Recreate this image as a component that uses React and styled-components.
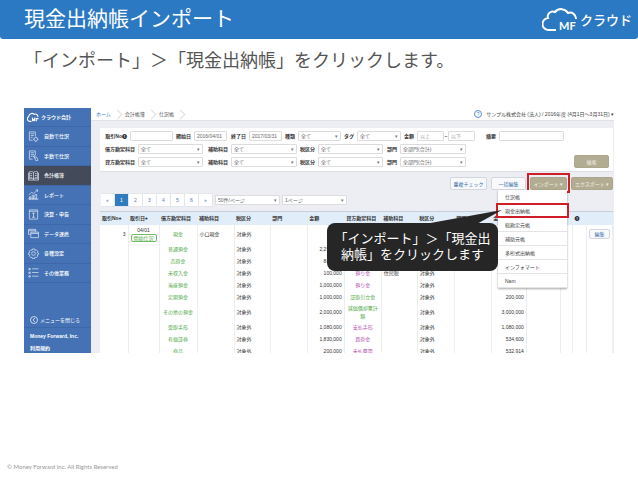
import React from "react";
import styled, { createGlobalStyle, css } from "styled-components";

const menuLateral = [
    { texto: "自動で仕訳", icono: "auto" },
    { texto: "手動で仕訳", icono: "manual" },
    { texto: "会計帳簿", icono: "book", activo: true },
    { texto: "レポート", icono: "report" },
    { texto: "決算・申告", icono: "closing" },
    { texto: "データ連携", icono: "data" },
    { texto: "各種設定", icono: "gear" },
    { texto: "その他業務", icono: "list" },
];

const importMenu = ["仕訳帳", "現金出納帳", "総勘定元帳", "補助元帳", "多桁式出納帳", "インフォマート", "Nam"];

const columnas = [
    ["取引No", 28, true],
    ["取引日", 31, true],
    ["借方勘定科目", 38],
    ["補助科目", 37],
    ["税区分", 36],
    ["部門", 37],
    ["金額", 37],
    ["貸方勘定科目", 37],
    ["補助科目", 36],
    ["税区分", 37],
    ["部門", 37],
    ["金額", 35],
    ["", 34],
    ["", 12],
    ["info", 14],
    ["", 26],
];

const filas = [
    { no: "3", debe: "現金", sub: "小口現金", alto: true },
    { debe: "普通預金", monto: "2,290,000" },
    { debe: "売掛金", monto: "838,000" },
    { debe: "未収入金", monto: "100,000", haber: "預り金", subHaber: "住民税", tono: "pink" },
    { debe: "当座預金", monto: "1,000,000", haber: "預り金", tono: "pink" },
    { debe: "定期預金", monto: "1,000,000", haber: "証取引立金", montoHaber: "200,000" },
    { debe: "その他の預金", monto: "2,000,000", haber: "減価償却累計額", montoHaber: "3,000,000", alto: true },
    { debe: "受取手形", monto: "1,080,000", haber: "支払手形", montoHaber: "1,080,000", tono: "pink" },
    { debe: "有価証券", monto: "1,830,000", haber: "買掛金", montoHaber: "534,600", tono: "pink" },
    { debe: "商品", monto: "200,000", haber: "未払費用", montoHaber: "532,914", tono: "pink" },
];

const Icono = ({ tipo }) => (
    <IconSvg viewBox="0 0 24 24" aria-hidden="true">
        {tipo === "auto" && (
            <>
                <path d="M10 20H3V2h13v9M6 6h7M6 10h7M6 14h4" />
                <circle cx="17" cy="18" r="4" />
                <path d="M17 12v2M17 22v2M11 18h2M21 18h2" />
            </>
        )}
        {tipo === "manual" && <path d="M10 20H3V2h13v9M6 6h7M6 10h7M6 14h4M12 13l3-1 6 7v4h-4zM12 13l5 6" />}
        {tipo === "book" && (
            <path d="M12 5v16M12 5c-3-2-6-2-9-1v15c3-1 6-1 9 1 3-2 6-2 9-1V4c-3-1-6-1-9 1M5 8h4M5 12h4M5 16h4M15 8h4M15 12h4M15 16h4M1 6v16h22V6" />
        )}
        {tipo === "report" && <path d="M2 13l6-6 4 3 9-8M17 2h4v4M3 22v-5h3v5zM9 22v-8h3v8zM15 22V12h4v10zM1 22h22" />}
        {tipo === "closing" && <path d="M3 2h18v20H3zM3 5h18M9 9h6M12 9v9M9 18h6" />}
        {tipo === "data" && <path d="M5 14H1V3h16v5M1 6h16M6 9h17v12H6zM6 12h17" />}
        {tipo === "gear" && (
            <>
                <circle cx="12" cy="12" r="4" />
                <path d="M10 2h4l1 3 3-1 3 3-1 3 3 1v3l-3 1 1 3-3 3-3-1-1 3h-4l-1-3-3 1-3-3 1-3-3-1v-3l3-1-1-3 3-3 3 1z" />
            </>
        )}
        {tipo === "list" && <path d="M2 3h3v3H2zM2 11h3v3H2zM2 19h3v3H2zM9 4h14M9 12h14M9 20h14" />}
    </IconSvg>
);

const Campo = ({ id, label, value, placeholder }) => (
    <>
        <Label htmlFor={id}>{label}</Label>
        <Input id={id} defaultValue={value} placeholder={placeholder} />
    </>
);

const Lista = ({ id, label, value = "全て" }) => (
    <>
        <Label htmlFor={id}>{label}</Label>
        <SelectBox>
            <Select id={id}>
                <option>{value}</option>
            </Select>
        </SelectBox>
    </>
);

const FilaCuenta = ({ id, label, children }) => (
    <FilterRow $cols={[34, 65, 28, 66, 21, 65, 17, 66, 143]}>
        <Lista id={`${id}-cuenta`} label={label} />
        <Lista id={`${id}-sub`} label="補助科目" />
        <Lista id={`${id}-iva`} label="税区分" />
        <Lista id={`${id}-depto`} label="部門" value="全部門(合計)" />
        {children}
    </FilterRow>
);

const Sidebar = () => (
    <Aside>
        <AppLogo>
            <svg width="13" height="10" viewBox="0 0 24 18" fill="none" stroke="#fff" strokeWidth="2" aria-hidden="true">
                <path d="M10 17H6a5 5 0 0 1-1-9 6 6 0 0 1 10-4 5 5 0 0 1 7 5M12 17v-5l2 3 2-3v5M19 17v-5h4" />
            </svg>
            クラウド会計
        </AppLogo>
        <Nav>
            {menuLateral.map((item) => (
                <NavItem href="#" key={item.texto} $activo={item.activo}>
                    <Icono tipo={item.icono} />
                    {item.texto}
                </NavItem>
            ))}
        </Nav>
        <CloseMenu>
            <svg width="8" height="8" viewBox="0 0 16 16" fill="none" stroke="#fff" strokeWidth="1.4" aria-hidden="true">
                <circle cx="8" cy="8" r="7" />
                <path d="M10 4L6 8l4 4" />
            </svg>
            メニューを閉じる
        </CloseMenu>
        <SideLink href="#">Money Forward, Inc.</SideLink>
        <SideLink href="#">利用規約</SideLink>
    </Aside>
);

const Filtros = () => (
    <Panel>
        <FilterRow $cols={[26, 43, 21, 33, 22, 33, 16, 43, 16, 44, 16, 27, 4, 27, 24, 65, 45]}>
            <Campo id="no" label="取引No❶" />
            <Campo id="desde" label="開始日" value="2016/04/01" />
            <Campo id="hasta" label="終了日" value="2017/03/31" />
            <Lista id="tipo" label="種類" />
            <Lista id="tag" label="タグ" />
            <Campo id="min" label="金額" placeholder="以上" />
            <Tilde htmlFor="max">~</Tilde>
            <Input id="max" placeholder="以下" />
            <Campo id="nota" label="摘要" />
        </FilterRow>
        <FilaCuenta id="debe" label="借方勘定科目" />
        <FilaCuenta id="haber" label="貸方勘定科目">
            <SearchButton>検索</SearchButton>
        </FilaCuenta>
    </Panel>
);

const Acciones = () => (
    <Actions>
        <ActionButton $ancho={37}>重複チェック</ActionButton>
        <ActionButton $ancho={35}>一括編集</ActionButton>
        <ImportBox>
            <ActionButton $ancho={37} $oliva>インポート ▾</ActionButton>
            <Menu>
                {importMenu.map((texto, i) => (
                    <MenuItem key={texto} $marcado={i === 1}>{texto}</MenuItem>
                ))}
            </Menu>
        </ImportBox>
        <ActionButton $ancho={42} $oliva>エクスポート ▾</ActionButton>
    </Actions>
);

const Tabla = () => (
    <Table>
        <colgroup>
            {columnas.map(([, ancho], i) => (
                <Col key={i} $ancho={ancho} />
            ))}
        </colgroup>
        <thead>
            <tr>
                {columnas.map(([texto, , orden], i) => (
                    <Th key={i}>
                        {texto === "info" ? "❶" : texto}
                        {orden && "♠"}
                    </Th>
                ))}
            </tr>
        </thead>
        <tbody>
            {filas.map((f) => (
                <Row key={f.debe} $alto={f.alto}>
                    <Td $align="right">{f.no}</Td>
                    <Td $align="center">
                        {f.no && <>04/01<Tag>開始仕訳</Tag></>}
                    </Td>
                    <Td $align="center" $tono="green">{f.debe}</Td>
                    <Td>{f.sub}</Td>
                    <Td>対象外</Td>
                    <Td />
                    <Td $align="right">{f.monto}</Td>
                    <Td $align="center" $tono={f.tono || "green"}>{f.haber}</Td>
                    <Td>{f.subHaber}</Td>
                    <Td>{f.haber && "対象外"}</Td>
                    <Td />
                    <Td $align="right">{f.montoHaber}</Td>
                    <Td />
                    <Td />
                    <Td />
                    <Td $align="center">{f.no && <EditButton>編集</EditButton>}</Td>
                </Row>
            ))}
        </tbody>
    </Table>
);

const App = () => (
    <Page>
        <GlobalStyle />
        <Header>
            <Title>現金出納帳インポート</Title>
            <Logo>
                <svg width="36" height="24" viewBox="0 0 36 24" aria-hidden="true">
                    <path
                        d="M14 22H7a6 6 0 0 1-1-12 5 5 0 0 1 7-6 8 8 0 0 1 13 1 6 6 0 0 1 8 6"
                        fill="none"
                        stroke="#fff"
                        strokeWidth="2"
                    />
                    <text x="17" y="22" fill="#fff" fontFamily="Lato, sans-serif" fontSize="11" fontWeight="700">MF</text>
                </svg>
                クラウド
            </Logo>
        </Header>
        <Lead>「インポート」＞「現金出納帳」をクリックします。</Lead>

        <Screen>
            <Sidebar />
            <Main>
                <TopBar>
                    <Crumbs>
                        <Crumb href="#" $inicio>ホーム</Crumb>
                        <Crumb href="#">会計帳簿</Crumb>
                        <Crumb href="#">仕訳帳</Crumb>
                    </Crumbs>
                    <Company>
                        <Help>?</Help>
                        サンプル株式会社 (法人) / 2016年度 (4月1日～3月31日) ▾
                    </Company>
                </TopBar>
                <Body>
                    <Filtros />
                    <Acciones />
                    <Paging>
                        <Pages>
                            {["«", "1", "2", "3", "4", "5", "6", "»"].map((p) => (
                                <PageButton key={p} $activo={p === "1"}>{p}</PageButton>
                            ))}
                        </Pages>
                        <PagingSelect>
                            <Select aria-label="件数"><option>50件/ページ</option></Select>
                        </PagingSelect>
                        <PagingSelect>
                            <Select aria-label="ページ"><option>1ページ</option></Select>
                        </PagingSelect>
                    </Paging>
                    <Tabla />
                </Body>
            </Main>
            <Balloon>
                <Tail viewBox="0 0 80 16" aria-hidden="true">
                    <path d="M0 15L77 1L50 16H0z" fill="#262626" />
                </Tail>
                「インポート」＞「現金出<br />納帳」をクリックします
            </Balloon>
        </Screen>

        <Footer>© Money Forward Inc. All Rights Reserved</Footer>
    </Page>
);

export default App;

const GlobalStyle = createGlobalStyle`
  * {
    box-sizing: border-box;
  }

  body {
    margin: 0;
    background: #fff;
    font-family: "Liberation Sans", "Noto Sans CJK JP", sans-serif;
  }

  button, input, select {
    font: inherit;
    margin: 0;
    padding: 0;
  }
`;

const Page = styled.div`
  display: flex;
  flex-direction: column;
  min-height: 100vh;
`;

const Header = styled.header`
  display: flex;
  justify-content: space-between;
  align-items: center;
  height: 39px;
  padding: 0 6px 6px 24px;
  background: #2b79c2;
  border-radius: 0 0 3px 3px;
  color: #fff;
`;

const Title = styled.h1`
  margin: 0;
  font-family: "Noto Sans CJK JP", sans-serif;
  font-size: 21px;
  line-height: 32px;
  font-weight: 400;
`;

const Logo = styled.div`
  display: flex;
  align-items: center;
  gap: 2px;
  padding-top: 6px;
  font-family: "Noto Sans CJK JP", sans-serif;
  font-size: 13px;
  line-height: 24px;
  font-weight: 500;
`;

const Lead = styled.p`
  margin: 0;
  padding: 8px 24px 0;
  font-family: "Noto Sans CJK JP", sans-serif;
  font-size: 18px;
  line-height: 24px;
  font-weight: 400;
  color: #555;
`;

const Screen = styled.section`
  position: relative;
  display: flex;
  max-height: 245px;
  margin: 37px 24px 0;
  overflow: hidden;
  font-size: 5px;
  line-height: 8px;
  color: #333;
`;

const Aside = styled.aside`
  flex: 0 0 67px;
  background: #4472b5;
  color: #fff;
`;

const AppLogo = styled.div`
  display: flex;
  align-items: center;
  gap: 2px;
  height: 18px;
  padding-left: 2px;
  font-weight: 700;
`;

const Nav = styled.nav`
  display: grid;
  grid-auto-rows: 1fr;
  height: 157px;
  border-bottom: 1px solid #3d67a8;
`;

const NavItem = styled.a`
  display: flex;
  align-items: center;
  gap: 5px;
  padding-left: 4px;
  border-top: 1px solid #3d67a8;
  background: ${({ $activo }) => ($activo ? "#434a59" : "transparent")};
  color: #fff;
  font-weight: 500;
  text-decoration: none;
`;

const IconSvg = styled.svg`
  width: 11px;
  height: 11px;
  fill: none;
  stroke: #e6edf8;
  stroke-width: 1.5;
`;

const CloseMenu = styled.button`
  display: flex;
  align-items: center;
  gap: 2px;
  width: 100%;
  height: 16px;
  margin-top: 29px;
  padding-left: 6px;
  border: none;
  border-bottom: 1px solid #3d67a8;
  background: transparent;
  color: #fff;
`;

const SideLink = styled.a`
  display: block;
  padding: 4px 0 0 6px;
  color: #fff;
  font-weight: 700;
  text-decoration: none;
`;

const Main = styled.main`
  flex: 1;
  min-width: 0;
  background: #eceef3;
`;

const TopBar = styled.div`
  display: flex;
  justify-content: space-between;
  align-items: center;
  height: 13px;
  background: #fff;
  border-bottom: 1px solid #e0e2e8;
`;

const Crumbs = styled.div`
  display: flex;
  padding-left: 5px;
`;

const Crumb = styled.a`
  display: flex;
  align-items: center;
  gap: 3px;
  padding-right: 4px;
  color: ${({ $inicio }) => ($inicio ? "#3a80c0" : "#555")};
  text-decoration: none;

  &::after {
    content: "";
    width: 6px;
    height: 6px;
    border: solid #ddd;
    border-width: 1px 1px 0 0;
    transform: rotate(45deg);
  }
`;

const Company = styled.div`
  display: flex;
  align-items: center;
  gap: 4px;
  color: #444;
`;

const Help = styled.span`
  width: 8px;
  height: 8px;
  border: 1px solid #5a8fc4;
  border-radius: 50%;
  line-height: 6px;
  text-align: center;
  color: #5a8fc4;
`;

const Body = styled.div`
  padding: 7px 1px 0 9px;
`;

const Panel = styled.form`
  padding: 1px 4px 3px;
  background: #fff;
  border-bottom: 1px solid #dfe1e6;
`;

const FilterRow = styled.div`
  display: grid;
  grid-template-columns: ${({ $cols }) => $cols.map((c) => `minmax(0, ${c}fr)`).join(" ")};
  align-items: center;
  height: 13px;
`;

const Label = styled.label`
  padding-right: 3px;
  font-weight: 700;
  text-align: right;
  white-space: nowrap;
`;

const Tilde = styled.label`
  text-align: center;
`;

const fieldStyle = css`
  width: 100%;
  height: 10px;
  padding: 0 2px;
  border: 1px solid #dcdcdc;
  border-radius: 1px;
  background: #fff;
  color: #666;
  outline: none;
`;

const Input = styled.input`
  ${fieldStyle}

  &::placeholder {
    color: #aaa;
  }
`;

const SelectBox = styled.div`
  position: relative;
  display: flex;

  &::after {
    content: "▾";
    position: absolute;
    right: 3px;
    top: 1px;
    color: #777;
    pointer-events: none;
  }
`;

const Select = styled.select`
  ${fieldStyle}
  appearance: none;
`;

const PagingSelect = styled(SelectBox)`
  width: 65px;
`;

const buttonStyle = css`
  border: 1px solid #d3d6dc;
  border-radius: 2px;
  background: #f8f9fb;
  color: #3a6fa8;
  line-height: 8px;
  text-align: center;
  white-space: nowrap;
`;

const olive = css`
  border-color: #aca78c;
  background: #b2ad92;
  color: #f2f0e6;
`;

const SearchButton = styled.button`
  ${buttonStyle}
  ${olive}
  justify-self: end;
  width: 35px;
  height: 13px;
`;

const Actions = styled.div`
  display: flex;
  justify-content: flex-end;
  gap: 4px;
  padding-top: 5px;
`;

const ActionButton = styled.button`
  ${buttonStyle}
  ${({ $oliva }) => $oliva && olive}
  width: ${({ $ancho }) => $ancho}px;
  height: 13px;
`;

const ImportBox = styled.div`
  position: relative;
  display: flex;

  &::after {
    content: "";
    position: absolute;
    inset: -4px -3px -3px;
    border: 2px solid #cf1f26;
    pointer-events: none;
  }
`;

const Menu = styled.ul`
  position: absolute;
  top: 13px;
  right: 0;
  z-index: 1;
  width: 69px;
  margin: 0;
  padding: 0;
  background: #fff;
  box-shadow: 0 1px 2px rgba(0, 0, 0, 0.35);
  list-style: none;
`;

const MenuItem = styled.li`
  position: relative;
  height: 14px;
  padding: 3px 7px;
  border-bottom: 1px solid #e4e4e4;
  color: #444;

  ${({ $marcado }) => $marcado && css`
    &::after {
      content: "";
      position: absolute;
      inset: -1px -2px;
      border: 2px solid #cf1f26;
    }
  `}
`;

const Paging = styled.div`
  display: flex;
  align-items: center;
  gap: 2px;
  padding: 3px 0 4px 1px;
`;

const Pages = styled.div`
  display: flex;
  background: #fff;
`;

const PageButton = styled.button`
  width: 14px;
  height: 14px;
  border: 1px solid #e4e6ea;
  border-left: none;
  background: ${({ $activo }) => ($activo ? "#2f7cbf" : "#fff")};
  color: ${({ $activo }) => ($activo ? "#fff" : "#4a84ba")};
`;

const Table = styled.table`
  width: 100%;
  table-layout: fixed;
  border-collapse: collapse;
  background: #fff;
`;

const Col = styled.col`
  width: ${({ $ancho }) => ($ancho / 512) * 100}%;
`;

const Th = styled.th`
  height: 13px;
  padding: 0 0 0 2px;
  border-top: 1px solid #c9ced6;
  background: #e2edfa;
  font-weight: 700;
  text-align: left;
  white-space: nowrap;
`;

const Row = styled.tr`
  height: ${({ $alto }) => ($alto ? 18 : 12)}px;
`;

const tonos = { green: "#4fa845", pink: "#b04fb0" };

const Td = styled.td`
  padding: 0 2px;
  border-right: 1px solid #eceef0;
  color: ${({ $tono }) => tonos[$tono] || "#333"};
  text-align: ${({ $align }) => $align || "left"};
`;

const Tag = styled.div`
  border: 1px solid #6fbf66;
  border-radius: 2px;
  color: #4fa845;
  line-height: 6px;
`;

const EditButton = styled.button`
  ${buttonStyle}
  width: 21px;
  height: 10px;
`;

const Balloon = styled.div`
  position: absolute;
  top: 115px;
  right: 116px;
  z-index: 2;
  width: 171px;
  padding: 7px 0 9px;
  border-radius: 8px;
  background: #262626;
  color: #fff;
  font-family: "Noto Sans CJK JP", sans-serif;
  font-size: 13px;
  line-height: 16px;
  text-align: center;
  white-space: nowrap;
`;

const Tail = styled.svg`
  position: absolute;
  top: -14px;
  right: -7px;
  width: 80px;
  height: 16px;
`;

const Footer = styled.footer`
  margin-top: auto;
  padding: 0 7px 8px;
  font-family: Lato, "Liberation Sans", sans-serif;
  font-size: 6px;
  line-height: 8px;
  color: #999;
`;
